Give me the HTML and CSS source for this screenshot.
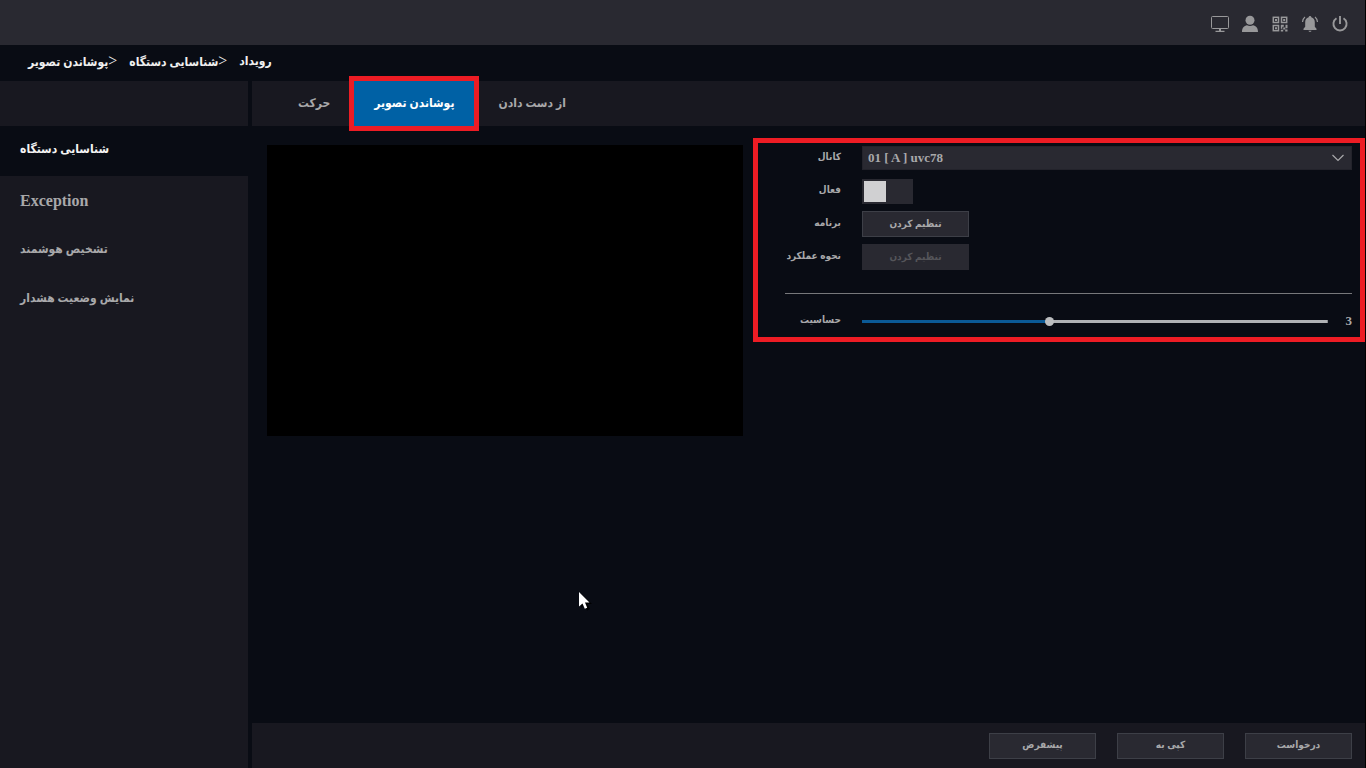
FILE: index.html
```html
<!DOCTYPE html>
<html lang="fa">
<head>
<meta charset="utf-8">
<title>رویداد</title>
<link rel="stylesheet" href="styles.css">
</head>
<body>
<div class="app">
  <header class="topbar">
    <button class="icon-btn" type="button" aria-label="Display"><svg viewBox="0 0 20 20"><rect x="1.500" y="2.500" width="17" height="12" rx="1" fill="none" stroke="currentColor"/><path d="M9 15h2v2H9zM5.500 16.800h9V18h-9z"/></svg></button>
    <button class="icon-btn" type="button" aria-label="User"><svg viewBox="0 0 20 20"><circle cx="10" cy="6.300" r="4.500"/><path d="M2 18c0-4.500 2.200-6.300 5-6.800 1.800 1.100 4.200 1.100 6 0 2.800.5 5 2.300 5 6.800z"/></svg></button>
    <button class="icon-btn" type="button" aria-label="QR code"><svg viewBox="0 0 20 20"><g fill="none" stroke="currentColor" stroke-width="1.500"><rect x="3.300" y="3.300" width="5.200" height="5.200"/><rect x="11.500" y="3.300" width="5.200" height="5.200"/><rect x="3.300" y="11.500" width="5.200" height="5.200"/></g><path d="M5 5h2v2H5zM13.200 5h2v2h-2zM5 13.200h2v2H5zM10.800 10.800h3v2h-1.500v2h-1.500zM15.500 10.800h2v3.500h-2zM13.200 13.500h2v2h-2zM10.800 15.800h2.400v1.700h-2.400zM15.200 15.500h2.300v2h-2.300z"/></svg></button>
    <button class="icon-btn" type="button" aria-label="Alarms"><svg viewBox="0 0 20 20"><path d="M10 2c.9 0 1.300.6 1.300 1.300 2.300.6 3.500 2.400 3.500 4.900v4.600l1.700 2V16h-13v-1.200l1.700-2V8.200c0-2.500 1.200-4.300 3.500-4.900C8.700 2.600 9.100 2 10 2zM8.500 16.800h3c-.2 1.500-2.800 1.500-3 0z"/><path d="M5 3Q3 4.500 2.500 8M15 3q2 1.500 2.500 5" fill="none" stroke="currentColor" stroke-width="1.200"/></svg></button>
    <button class="icon-btn" type="button" aria-label="Power"><svg viewBox="0 0 20 20"><path d="M6.500 4.300a6.600 6.600 0 1 0 7 0M10 2v8" fill="none" stroke="currentColor" stroke-width="1.900"/></svg></button>
  </header>
  <nav class="crumbs" aria-label="Breadcrumb">
    <a href="#">پوشاندن تصویر<span class="sep">&gt;</span></a>
    <a href="#">شناسایی دستگاه<span class="sep">&gt;</span></a>
    <a href="#">رویداد</a>
  </nav>
  <div class="body">
    <aside class="sidebar">
      <div class="side-head"></div>
      <a class="side-item active" href="#">شناسایی دستگاه</a>
      <nav class="side-list">
        <a class="side-item latin" href="#">Exception</a>
        <a class="side-item" href="#">تشخیص هوشمند</a>
        <a class="side-item" href="#">نمایش وضعیت هشدار</a>
      </nav>
    </aside>
    <main class="main">
      <nav class="tabs">
        <a class="tab" href="#">حرکت</a>
        <a class="tab current" href="#">پوشاندن تصویر</a>
        <a class="tab" href="#">از دست دادن</a>
      </nav>
      <section class="content">
        <div class="preview"></div>
        <form class="settings">
          <div class="row">
            <label for="channel">کانال</label>
            <div class="select-wrap">
              <select id="channel"><option>01 [ A ] uvc78</option></select>
              <svg class="chevron" viewBox="0 0 14 8"><path d="M1.500 1 7 6.500 12.500 1" fill="none" stroke="currentColor" stroke-width="1.200"/></svg>
            </div>
          </div>
          <div class="row">
            <label for="enable">فعال</label>
            <input class="toggle" id="enable" type="checkbox">
          </div>
          <div class="row">
            <label for="schedule">برنامه</label>
            <button class="btn" id="schedule" type="button">تنظیم کردن</button>
          </div>
          <div class="row">
            <label for="action">نحوه عملکرد</label>
            <button class="btn" id="action" type="button" disabled>تنظیم کردن</button>
          </div>
          <hr>
          <div class="row">
            <label for="level">حساسیت</label>
            <div class="slider">
              <input id="level" type="range" min="1" max="6" value="3">
              <output for="level">3</output>
            </div>
          </div>
        </form>
      </section>
      <footer class="actions">
        <button class="btn" type="button">پیشفرض</button>
        <button class="btn" type="button">کپی به</button>
        <button class="btn" type="button">درخواست</button>
      </footer>
    </main>
  </div>
  <svg class="pointer" viewBox="0 0 14 20"><path d="M3 3v14l3.500-3 2.500 5.500 3-1.500-2.500-5H14z" fill="#000"/><path d="M1 1v14.500l3.500-3 2.300 5.200 2.400-1L7 11.500h4.500z" fill="#fff"/></svg>
</div>
</body>
</html>
```

FILE: styles.css
```css
* { box-sizing: border-box; }
body {
  margin: 0;
  background: #000;
  color: #a8a8aa;
  font-family: "Liberation Serif", "DejaVu Sans Condensed", "DejaVu Sans", serif;
  font-size: 12px;
  font-weight: bold;
}
a { color: inherit; text-decoration: none; }
button, select { font: inherit; color: inherit; }

.app {
  position: relative;
  display: flex;
  flex-direction: column;
  min-height: 100vh;
  margin-right: 1px;
  background: #090c14;
}
.topbar {
  display: flex;
  justify-content: flex-end;
  align-items: center;
  gap: 10px;
  height: 45px;
  padding: 2px 15px 0 0;
  background: #292931;
}
.icon-btn {
  width: 20px;
  height: 20px;
  padding: 0;
  border: 0;
  background: none;
  color: #98989a;
}
.icon-btn svg { display: block; fill: currentColor; }

.crumbs {
  display: flex;
  align-items: center;
  gap: 12px;
  height: 36px;
  padding: 0 28px 3px;
  color: #f0f0f0;
}
.sep { unicode-bidi: isolate; direction: ltr; font-size: 16px; font-weight: normal; line-height: 1; }

.body { display: flex; flex: 1; gap: 4px; }
.sidebar { display: flex; flex-direction: column; width: 248px; }
.side-head { height: 45px; background: #181820; }
.side-item {
  display: flex;
  align-items: center;
  height: 49px;
  padding: 0 20px;
}
.side-item.active { height: 50px; padding-bottom: 3px; color: #f4f4f4; }
.side-list { flex: 1; background: #181820; }
.latin { font-size: 16px; }

.main { display: flex; flex: 1; flex-direction: column; min-width: 0; }
.tabs { display: flex; height: 45px; padding-left: 22px; background: #181820; }
.tab {
  display: flex;
  align-items: center;
  padding: 0 24px;
}
.tab.current {
  padding: 0 20px;
  background: #0061a5;
  color: #fff;
  outline: 5px solid #ed1c24;
}

.content {
  display: grid;
  flex: 1;
  grid-template-columns: 7fr 9fr;
  align-items: start;
  gap: 10px;
  padding: 12px 0 0 15px;
}
.preview { aspect-ratio: 476 / 291; margin-top: 7px; background: #000; }
.settings {
  display: flex;
  flex-direction: column;
  gap: 7px;
  padding: 2px 8px 3px 27px;
  border: 5px solid #ed1c24;
  font-size: 10px;
}
.row {
  display: grid;
  grid-template-columns: 56px 1fr;
  align-items: center;
  gap: 21px;
  height: 26px;
}
.row label { padding-bottom: 3px; text-align: right; white-space: nowrap; direction: rtl; }
.select-wrap { position: relative; }
.select-wrap select {
  display: block;
  width: 100%;
  height: 24px;
  padding: 0 5px 2px;
  border: 1px solid #23232b;
  border-radius: 0;
  background: #292931;
  font-size: 13px;
  appearance: none;
}
.chevron { position: absolute; top: 8px; right: 7px; width: 14px; height: 8px; pointer-events: none; }
.toggle {
  width: 51px;
  height: 25px;
  margin: 0;
  padding: 2px;
  background: #292931;
  appearance: none;
}
.toggle::before { content: ""; display: block; width: 22px; height: 21px; background: #d0d0d2; }
.toggle:checked::before { margin-left: auto; }
.btn {
  width: 107px;
  height: 26px;
  padding: 0 0 2px;
  border: 1px solid #3d3f47;
  background: #292931;
  font-size: 10px;
}
.btn:disabled { border-color: #292931; color: #55555a; }
hr { width: 100%; height: 1px; margin: 16px 0 7px; border: 0; background: #77787b; }
.slider { display: flex; align-items: center; gap: 18px; font-size: 13px; }
.slider input {
  flex: 1;
  height: 9px;
  margin: 0;
  background: linear-gradient(90deg, #0b5a96 40%, #b0b2b5 40%) center / 100% 3px no-repeat;
  appearance: none;
}
.slider input::-webkit-slider-thumb {
  width: 9px;
  height: 9px;
  border-radius: 50%;
  background: #bcbec0;
  appearance: none;
}

.actions {
  display: flex;
  justify-content: flex-end;
  align-items: center;
  gap: 21px;
  height: 45px;
  padding-right: 13px;
  background: #181820;
}
.pointer { position: absolute; top: 591px; left: 578px; width: 14px; height: 20px; }
```
